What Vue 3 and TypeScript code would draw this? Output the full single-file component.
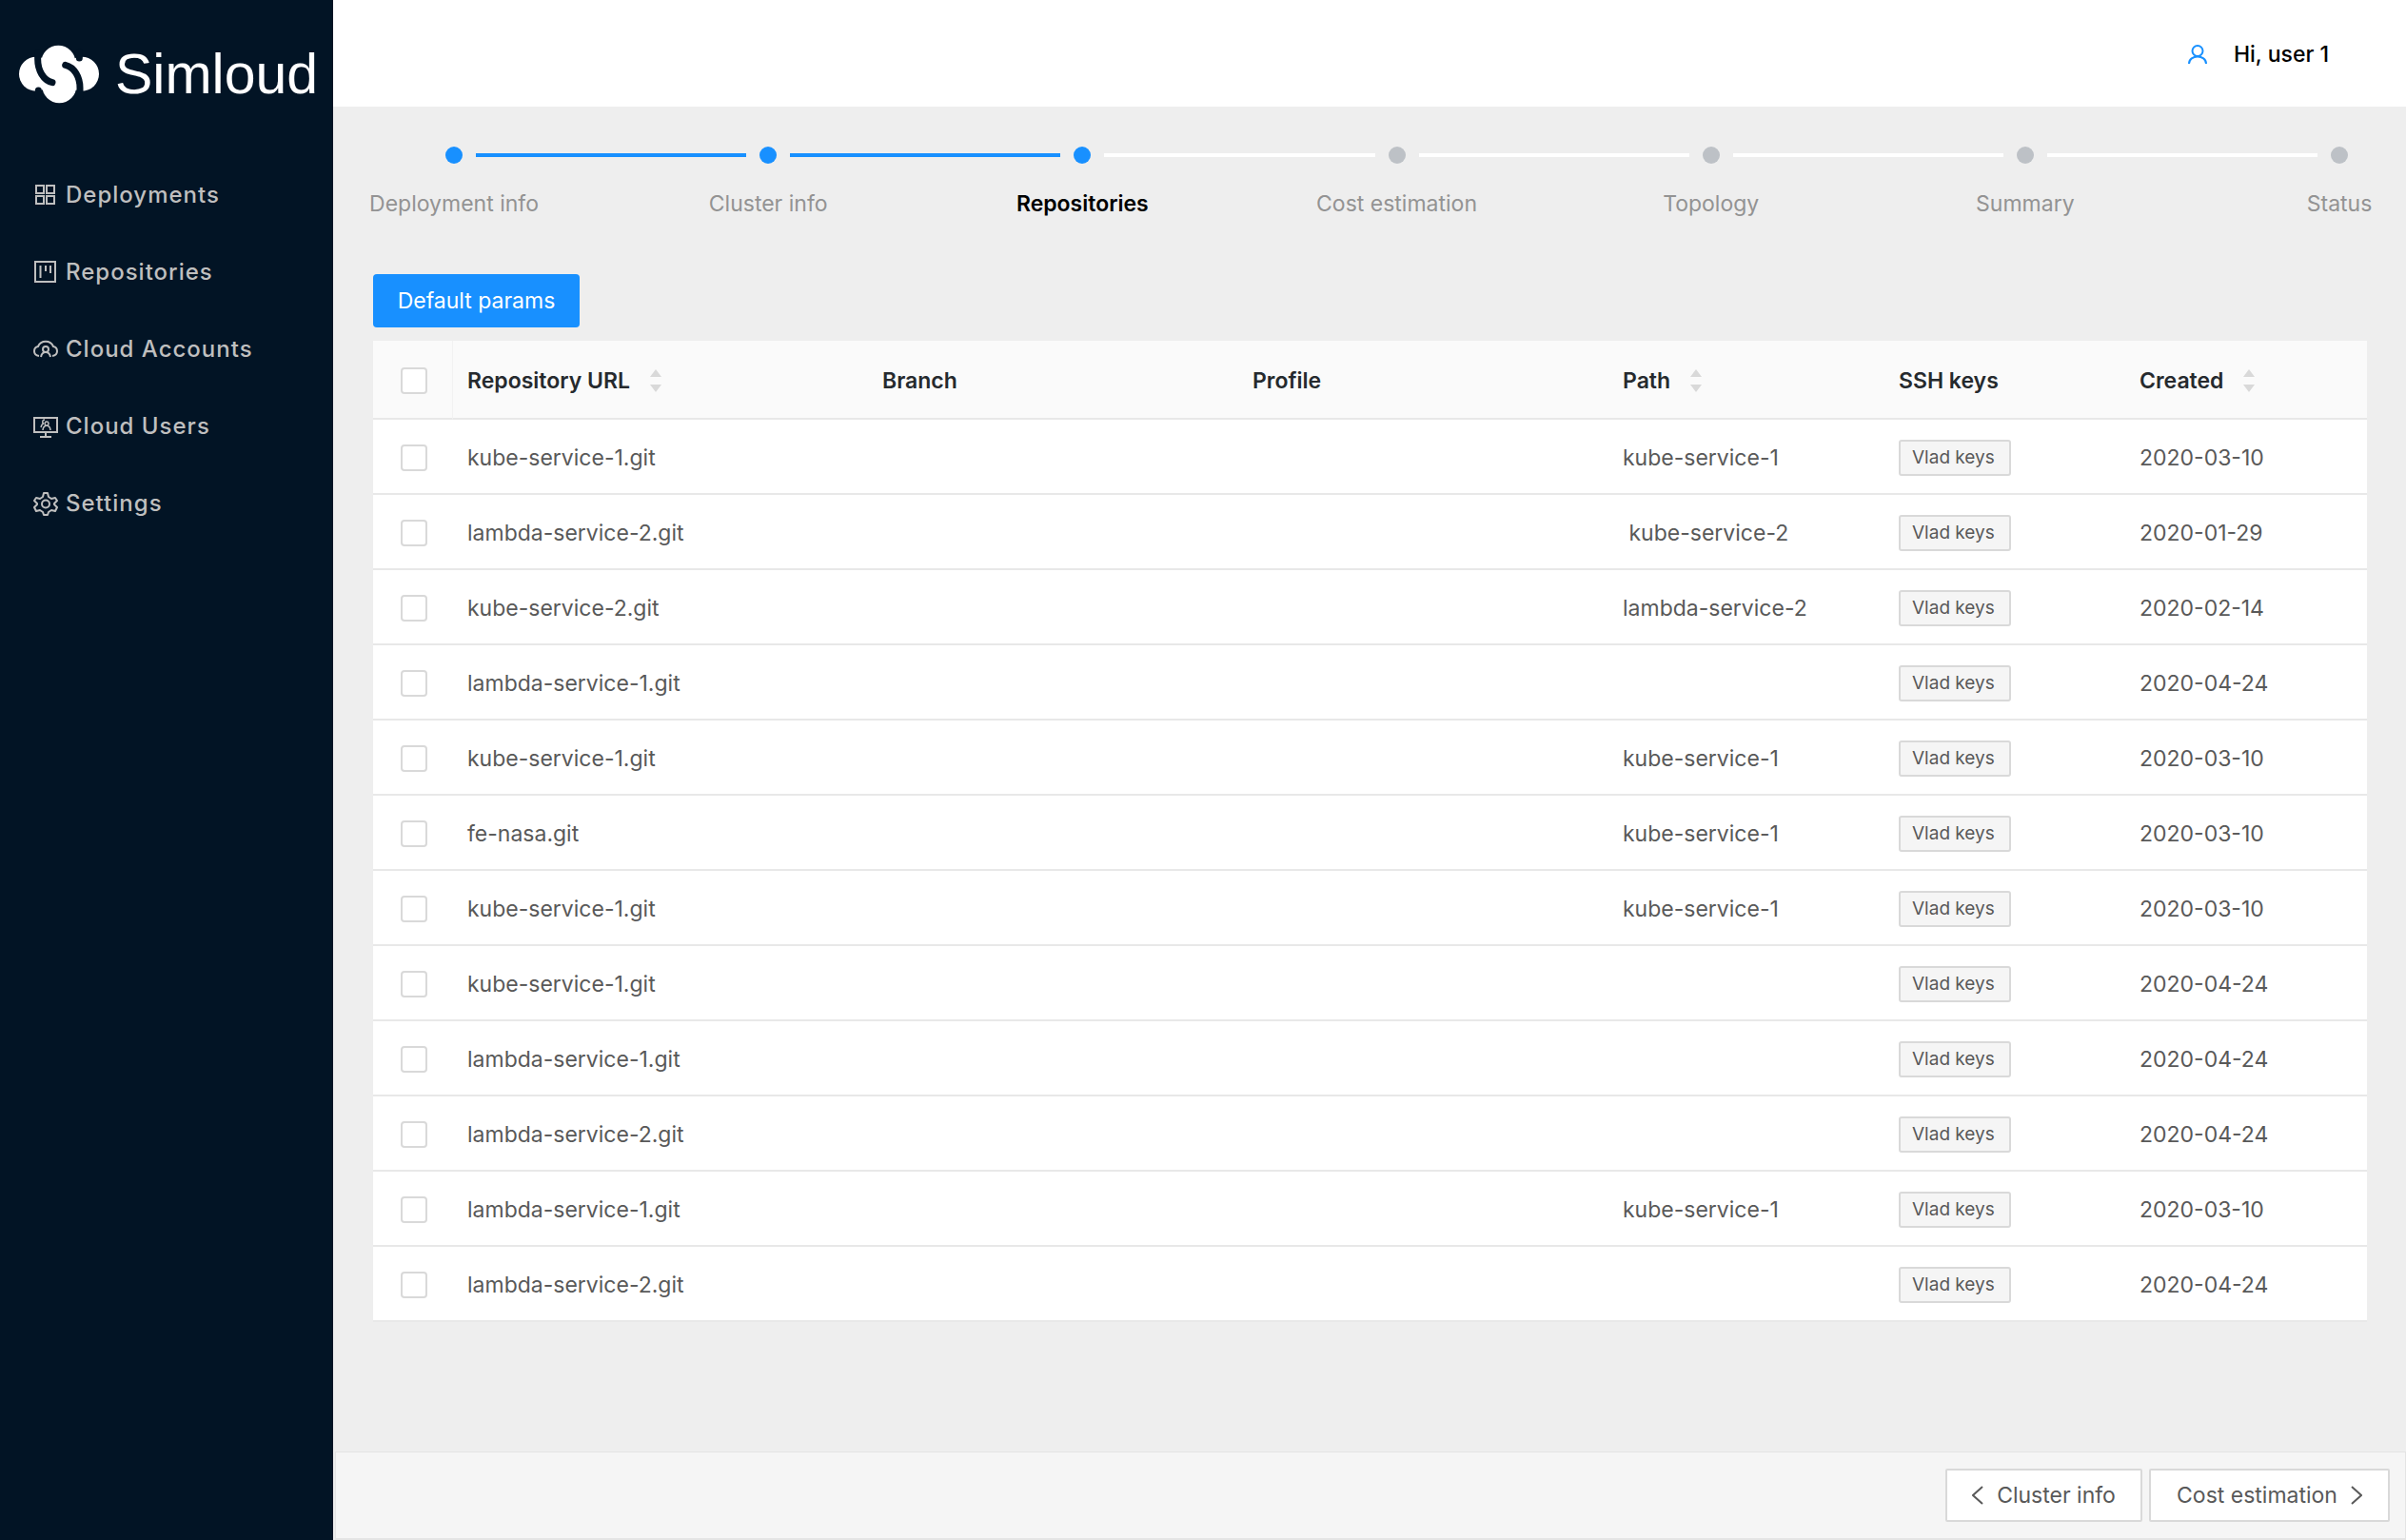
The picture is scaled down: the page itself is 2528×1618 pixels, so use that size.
<script setup lang="ts">
import { ref, computed } from 'vue'

interface Repo {
  url: string
  path: string
  created: string
}

const menu = [
  { label: 'Deployments', icon: 'grid' },
  { label: 'Repositories', icon: 'board' },
  { label: 'Cloud Accounts', icon: 'cloud' },
  { label: 'Cloud Users', icon: 'monitor' },
  { label: 'Settings', icon: 'gear' },
]

const steps = [
  'Deployment info',
  'Cluster info',
  'Repositories',
  'Cost estimation',
  'Topology',
  'Summary',
  'Status',
]
const current = 2

const columns = [
  { label: 'Repository URL', sortable: true, cls: 'url' },
  { label: 'Branch', sortable: false, cls: 'branch' },
  { label: 'Profile', sortable: false, cls: 'profile' },
  { label: 'Path', sortable: true, cls: 'path' },
  { label: 'SSH keys', sortable: false, cls: 'keys' },
  { label: 'Created', sortable: true, cls: 'created' },
]

const repos: Repo[] = [
  { url: 'kube-service-1.git', path: 'kube-service-1', created: '2020-03-10' },
  { url: 'lambda-service-2.git', path: '\u00a0kube-service-2', created: '2020-01-29' },
  { url: 'kube-service-2.git', path: 'lambda-service-2', created: '2020-02-14' },
  { url: 'lambda-service-1.git', path: '', created: '2020-04-24' },
  { url: 'kube-service-1.git', path: 'kube-service-1', created: '2020-03-10' },
  { url: 'fe-nasa.git', path: 'kube-service-1', created: '2020-03-10' },
  { url: 'kube-service-1.git', path: 'kube-service-1', created: '2020-03-10' },
  { url: 'kube-service-1.git', path: '', created: '2020-04-24' },
  { url: 'lambda-service-1.git', path: '', created: '2020-04-24' },
  { url: 'lambda-service-2.git', path: '', created: '2020-04-24' },
  { url: 'lambda-service-1.git', path: 'kube-service-1', created: '2020-03-10' },
  { url: 'lambda-service-2.git', path: '', created: '2020-04-24' },
]

const selected = ref<number[]>([])
const allSelected = computed({
  get: () => selected.value.length === repos.length,
  set: (on: boolean) => {
    selected.value = on ? repos.map((_, i) => i) : []
  },
})
</script>

<template>
  <div class="app">
    <aside class="sidebar">
      <a class="brand" href="#">
        <svg class="logo" viewBox="18 20 252 186" aria-hidden="true">
          <g fill="#fff">
            <circle cx="72" cy="112" r="54" />
            <circle cx="216" cy="112" r="54" />
            <circle cx="142" cy="76" r="54" />
            <circle cx="145" cy="150" r="54" />
          </g>
          <g fill="none" stroke="#021425" stroke-width="21" stroke-linecap="round">
            <path d="M77 46V66C77 100 94 132 123 139" />
            <path d="M79 164V182" />
            <path d="M164 84C193 91 210 122 210 156V182" />
            <path d="M208 62V44" />
          </g>
        </svg>
        <span>Simloud</span>
      </a>
      <nav class="menu">
        <a v-for="item in menu" :key="item.label" href="#">
          <svg viewBox="0 0 26 26" fill="none" stroke="currentColor" stroke-width="2" aria-hidden="true">
            <path v-if="item.icon === 'grid'" d="M3 3h8v8H3zM14 3h8v8h-8zM3 14h8v8H3zM14 14h8v8h-8z" />
            <path v-else-if="item.icon === 'board'" d="M2 2h21v21H2zM7.500 6v13M13 6v6M18 6v8" />
            <g v-else-if="item.icon === 'cloud'">
              <path d="M6 20C-1 19 0 11 5 10C8 3 18 3 21 10C26 11 27 19 20 20" />
              <circle cx="13" cy="13" r="3" />
              <path d="M8 21q1-5 5-5t5 5" />
            </g>
            <g v-else-if="item.icon === 'monitor'">
              <path d="M1 4h24v15H1zM13 19v5M7 24h12" />
              <path d="M14 8a2 2 0 1 0 .1 0M10 17q0-4 4-5q4 1 4 5M8 14q1-4 3-4M12 6q-3 0-2 4" stroke-width="1.500" />
            </g>
            <g v-else>
              <path d="M11 2h4l1 4 3 2 4-1 2 3-3 3v1l3 3-2 4-4-1-3 2-1 3h-4l-1-3-3-2-4 1-2-4 3-3v-1l-3-3 2-3 4 1 3-2z" stroke-linejoin="round" />
              <circle cx="13" cy="13.500" r="4" />
            </g>
          </svg>
          <span>{{ item.label }}</span>
        </a>
      </nav>
    </aside>

    <div class="page">
      <header class="topbar">
        <svg viewBox="0 0 20 20" fill="none" stroke="currentColor" stroke-width="2" aria-hidden="true">
          <circle cx="10" cy="6.500" r="5.500" />
          <path d="M1 20c0-10 18-10 18 0" />
        </svg>
        <span>Hi, user 1</span>
      </header>

      <main class="content">
        <ol class="steps">
          <li
            v-for="(step, i) in steps"
            :key="step"
            :class="{ reached: i <= current, passed: i < current, active: i === current }"
          >
            <i class="dot"></i>
            <i v-if="i < steps.length - 1" class="line"></i>
            <span class="name">{{ step }}</span>
          </li>
        </ol>

        <section class="panel">
          <button type="button" class="primary">Default params</button>
          <table>
            <colgroup>
              <col class="col-check" />
              <col v-for="c in columns" :key="c.cls" :class="'col-' + c.cls" />
            </colgroup>
            <thead>
              <tr>
                <th class="check"><input v-model="allSelected" type="checkbox" aria-label="Select all" /></th>
                <th v-for="c in columns" :key="c.cls" scope="col">
                  <span class="heading">
                    {{ c.label }}
                    <svg v-if="c.sortable" viewBox="0 0 14 26" aria-hidden="true">
                      <path d="M7 1l6 8H1zM7 25l6-8H1z" />
                    </svg>
                  </span>
                </th>
              </tr>
            </thead>
            <tbody>
              <tr v-for="(repo, i) in repos" :key="i">
                <td class="check">
                  <input v-model="selected" type="checkbox" :value="i" :aria-label="'Select ' + repo.url" />
                </td>
                <td>{{ repo.url }}</td>
                <td></td>
                <td></td>
                <td>{{ repo.path }}</td>
                <td><span class="tag">Vlad keys</span></td>
                <td>{{ repo.created }}</td>
              </tr>
            </tbody>
          </table>
        </section>
      </main>

      <footer class="actions">
        <button type="button" class="back">
          <svg viewBox="0 0 12 20" aria-hidden="true"><path d="M11 1L1 10l10 9" /></svg>
          Cluster info
        </button>
        <button type="button" class="next">
          Cost estimation
          <svg viewBox="0 0 12 20" aria-hidden="true"><path d="M1 1l10 9-10 9" /></svg>
        </button>
      </footer>
    </div>
  </div>
</template>

<style>
body {
  margin: 0;
}
</style>

<style scoped>
.app {
  display: flex;
  min-height: 100vh;
  background: #eee;
  color: #595959;
  font: 23px/32px Inter, "Liberation Sans", sans-serif;
}
.app * {
  box-sizing: border-box;
}
.sidebar {
  flex: none;
  width: 350px;
  background: #021425;
}
.brand {
  display: flex;
  align-items: center;
  gap: 17px;
  height: 155px;
  padding-left: 20px;
  color: #fff;
  font: 59px/64px "Liberation Sans", sans-serif;
  text-decoration: none;
}
.logo {
  width: 84px;
  height: 62px;
}
.menu {
  display: flex;
  flex-direction: column;
  gap: 49px;
  padding: 34px 35px;
}
.menu a {
  display: flex;
  align-items: center;
  gap: 8px;
  color: #bfbfbf;
  font-size: 24px;
  font-weight: 500;
  letter-spacing: 1px;
  text-decoration: none;
}
.menu svg {
  width: 26px;
  height: 26px;
}
.page {
  display: flex;
  flex: 1;
  flex-direction: column;
  min-width: 0;
}
.topbar {
  display: flex;
  align-items: center;
  justify-content: flex-end;
  gap: 28px;
  height: 112px;
  padding: 2px 81px 0 0;
  background: #fff;
  color: #000;
  font-weight: 500;
}
.topbar svg {
  width: 20px;
  height: 20px;
  color: #1890ff;
}
.content {
  flex: 1;
}
.steps {
  display: flex;
  margin: 0;
  padding: 42px 61px 58px 118px;
  list-style: none;
}
.steps li {
  display: grid;
  flex: 1;
  grid-template-columns: 18px 1fr;
  align-items: center;
  row-gap: 26px;
  color: #939393;
}
.steps li:last-child {
  flex: none;
  grid-template-columns: 18px;
}
.dot {
  width: 18px;
  height: 18px;
  border-radius: 50%;
  background: #bdc1c6;
}
.line {
  height: 4px;
  margin: 0 14px;
  background: #fff;
}
.reached .dot,
.passed .line {
  background: #1890ff;
}
.name {
  grid-row: 2;
  grid-column: 1;
  justify-self: center;
  white-space: nowrap;
}
.active .name {
  color: #000;
  font-weight: 600;
}
.panel {
  padding: 0 41px 40px 42px;
}
button {
  display: inline-flex;
  align-items: center;
  justify-content: center;
  height: 56px;
  padding: 0;
  border: 2px solid #d9d9d9;
  border-radius: 2px;
  background: #fff;
  color: #595959;
  font: inherit;
}
.primary {
  width: 217px;
  margin-bottom: 14px;
  border: 0;
  border-radius: 4px;
  background: #1890ff;
  color: #fff;
}
table {
  width: 100%;
  border-collapse: separate;
  border-spacing: 0;
  table-layout: fixed;
  background: #fff;
}
.col-check {
  width: 84px;
}
.col-url {
  width: 436px;
}
.col-branch,
.col-profile {
  width: 389px;
}
.col-path {
  width: 290px;
}
.col-keys {
  width: 253px;
}
.col-created {
  width: 254px;
}
th,
td {
  height: 79px;
  padding: 2px 0 0 15px;
  border-bottom: 2px solid #e8e8e8;
  text-align: left;
  vertical-align: middle;
}
th {
  height: 83px;
  background: #fafafa;
  color: #262a2e;
  font-weight: 600;
}
.check {
  padding-left: 29px;
}
th.check {
  border-right: 1px solid #f2f2f2;
}
.check input {
  display: block;
  width: 28px;
  height: 28px;
  margin: 0;
  border: 2px solid #d9d9d9;
  border-radius: 4px;
  background: #fff;
  appearance: none;
}
.check input:checked {
  background: #1890ff;
}
.heading {
  display: flex;
  align-items: center;
  gap: 20px;
}
.heading svg {
  width: 14px;
  height: 26px;
  fill: #d9d9d9;
}
.tag {
  display: block;
  width: 118px;
  height: 38px;
  padding-left: 12px;
  border: 2px solid #d9d9d9;
  border-radius: 3px;
  background: #f5f5f5;
  font-size: 19px;
  line-height: 34px;
}
.actions {
  display: flex;
  justify-content: flex-end;
  gap: 7px;
  margin-left: 2px;
  padding: 17px 16px;
  border: 1px solid #e4e4e4;
  border-bottom-width: 2px;
  background: #f5f5f5;
}
.actions button {
  gap: 14px;
}
.back {
  width: 207px;
}
.next {
  width: 253px;
}
.actions svg {
  width: 12px;
  height: 20px;
  fill: none;
  stroke: #595959;
  stroke-width: 2;
}
</style>
